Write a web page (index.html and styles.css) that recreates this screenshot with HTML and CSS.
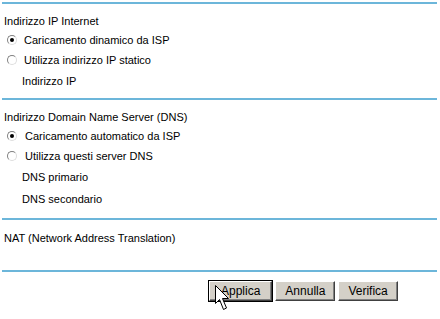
FILE: index.html
```html
<!DOCTYPE html>
<html>
<head>
    <title>Impostazioni Internet</title>
    <link rel="stylesheet" href="styles.css">
</head>
<body>
    <div class="panel">
        <div class="section">
            <div class="title">Indirizzo IP Internet</div>
            <label class="opt"><span class="radio on"></span>Caricamento dinamico da ISP</label>
            <label class="opt"><span class="radio"></span>Utilizza indirizzo IP statico</label>
            <div class="field">Indirizzo IP</div>
        </div>

        <div class="section dns">
            <div class="title">Indirizzo Domain Name Server (DNS)</div>
            <label class="opt"><span class="radio on"></span>Caricamento automatico da ISP</label>
            <label class="opt"><span class="radio"></span>Utilizza questi server DNS</label>
            <div class="field">DNS primario</div>
            <div class="field">DNS secondario</div>
        </div>

        <div class="section nat">
            <div class="title">NAT (Network Address Translation)</div>
        </div>

        <div class="buttons">
            <button class="btn focus">Applica</button>
            <button class="btn">Annulla</button>
            <button class="btn">Verifica</button>
            <!-- mouse pointer over Applica -->
            <svg class="cursor" width="15" height="26" viewBox="0 0 15 26">
                <path d="M0.5 0.5 L0.5 18.5 L4.5 14.5 L8.5 24.5 L11.5 23 L7.5 13.5 L13.5 13.5 Z" fill="#fff" stroke="#000" stroke-width="1"/>
            </svg>
        </div>
    </div>
</body>
</html>
```

FILE: styles.css
```css
body {
    margin: 0;
    background: #fff;
    font-family: "Liberation Sans", Arial, sans-serif;
    font-size: 11px;
    color: #000;
}
.panel {
    padding: 2px 3px 0 2px;
}
.section {
    border-top: 2px solid #6cb6da;
    padding: 8px 0 8px 2px;
    height: 78px;
}
.section.dns {
    height: 102px;
}
.section.nat {
    padding-top: 9px;
    padding-bottom: 0;
    height: 41px;
}
.title {
    height: 18px;
    line-height: 18px;
}
.opt {
    display: flex;
    align-items: center;
    height: 20px;
    padding-left: 3px;
}
.dns .opt .radio {
    margin-right: 8px;
}
.radio {
    width: 10px;
    height: 10px;
    margin-right: 7px;
    border-radius: 50%;
    border: 1px solid #808080;
    border-right-color: #ddd;
    border-bottom-color: #ddd;
    background: #fff;
    box-sizing: border-box;
    position: relative;
}
.radio.on::after {
    content: "";
    position: absolute;
    left: 2px;
    top: 2px;
    width: 4px;
    height: 4px;
    border-radius: 50%;
    background: #000;
}
.field {
    height: 22px;
    line-height: 22px;
    padding-left: 18px;
}
.buttons {
    border-top: 2px solid #6cb6da;
    padding: 9px 0 18px 207px;
    display: flex;
    align-items: flex-start;
    gap: 3px;
    position: relative;
}
.btn {
    font-family: "Liberation Sans", Arial, sans-serif;
    font-size: 12px;
    background: #d4d0c8;
    border: 1px solid;
    border-color: #fff #404040 #404040 #fff;
    padding: 1px 9px;
    height: 20px;
    box-shadow: inset -1px -1px 0 #808080;
}
.btn.focus {
    outline: 1px solid #000;
    padding: 1px 11px;
}
.cursor {
    position: absolute;
    left: 213px;
    top: 13px;
    z-index: 2;
    overflow: visible;
}
```
